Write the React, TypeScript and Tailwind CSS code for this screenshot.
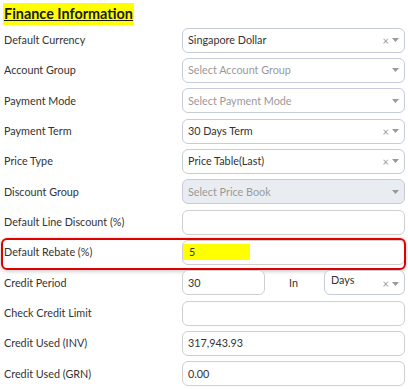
import React from "react";

type Row = {
  label: string;
  kind: "select" | "input" | "period";
  value?: string;
  placeholder?: string;
  clear?: boolean;
  disabled?: boolean;
  highlight?: boolean;
};

const rows: Row[] = [
  { label: "Default Currency", kind: "select", value: "Singapore Dollar", clear: true },
  { label: "Account Group", kind: "select", placeholder: "Select Account Group" },
  { label: "Payment Mode", kind: "select", placeholder: "Select Payment Mode" },
  { label: "Payment Term", kind: "select", value: "30 Days Term", clear: true },
  { label: "Price Type", kind: "select", value: "Price Table(Last)", clear: true },
  { label: "Discount Group", kind: "select", placeholder: "Select Price Book", disabled: true },
  { label: "Default Line Discount (%)", kind: "input", value: "" },
  { label: "Default Rebate (%)", kind: "input", value: "5", highlight: true },
  { label: "Credit Period", kind: "period" },
  { label: "Check Credit Limit", kind: "input", value: "" },
  { label: "Credit Used (INV)", kind: "input", value: "317,943.93" },
  { label: "Credit Used (GRN)", kind: "input", value: "0.00" },
];

const Arrows = ({ clear }: { clear?: boolean }) => (
  <span className="ml-auto flex items-center gap-[3px] pr-[5px] text-[#999]">
    {clear && <span className="text-[11px] leading-none">×</span>}
    <svg width="7" height="4" viewBox="0 0 7 4">
      <path d="M0 0h7L3.5 4z" fill="#999" />
    </svg>
  </span>
);

const Select = ({ row }: { row: Row }) => (
  <div
    className={`flex h-[25px] items-center rounded-[6px] border border-[#c6ccd8] pl-[5px] ${
      row.disabled ? "bg-[#e9edf2]" : "bg-white"
    }`}
  >
    <span className={row.value ? "text-[#333]" : "text-[#999]"}>
      {row.value || row.placeholder}
    </span>
    <Arrows clear={row.clear} />
  </div>
);

const Input = ({ value, highlight }: { value?: string; highlight?: boolean }) => (
  <div className="flex h-[25px] items-center rounded-[6px] border border-[#cfcfcf] bg-white pl-[5px] text-[#333]">
    {highlight ? (
      <span className="-ml-[5px] flex h-[16px] w-[67px] items-center bg-[#ffff00] pl-[6px]">
        {value}
      </span>
    ) : (
      value
    )}
  </div>
);

export default function App() {
  return (
    <div
      className="w-[408px] bg-white pl-[4px] pr-[3px] pt-[3px] text-[10.8px] leading-[16px] text-[#333]"
      style={{ fontFamily: "Lato, sans-serif" }}
    >
      <div className="-ml-[1px] h-[22px] w-fit bg-[#ffff00] px-[1px] text-[14.4px] font-bold leading-[22px] text-[#1a1a1a] underline">
        Finance Information
      </div>
      <div className="mt-[2.5px] flex flex-col gap-[5.35px]">
        {rows.map((row) => (
          <div key={row.label} className="relative flex h-[25px] items-center">
            {row.highlight && (
              <div className="pointer-events-none absolute -bottom-[5px] -left-[3px] -right-[1px] -top-[2px] rounded-[6px] border-2 border-[#e00000] shadow-[0_1px_4px_rgba(0,0,0,0.25)]" />
            )}
            <div className="w-[178px] shrink-0">{row.label}</div>
            <div className="flex-1">
              {row.kind === "select" && <Select row={row} />}
              {row.kind === "input" && <Input value={row.value} highlight={row.highlight} />}
              {row.kind === "period" && (
                <div className="flex items-center">
                  <div className="w-[83px]">
                    <Input value="30" />
                  </div>
                  <div className="w-[59px] pl-[24px] text-[#333]">In</div>
                  <div className="flex h-[25px] flex-1 items-start rounded-[6px] border border-[#c6ccd8] bg-white pl-[6px] pt-[1px]">
                    <span>Days</span>
                    <span className="ml-auto mt-[6px] flex items-center gap-[3px] pr-[5px] text-[#999]">
                      <span className="text-[11px] leading-none">×</span>
                      <svg width="7" height="4" viewBox="0 0 7 4">
                        <path d="M0 0h7L3.5 4z" fill="#999" />
                      </svg>
                    </span>
                  </div>
                </div>
              )}
            </div>
          </div>
        ))}
      </div>
    </div>
  );
}
